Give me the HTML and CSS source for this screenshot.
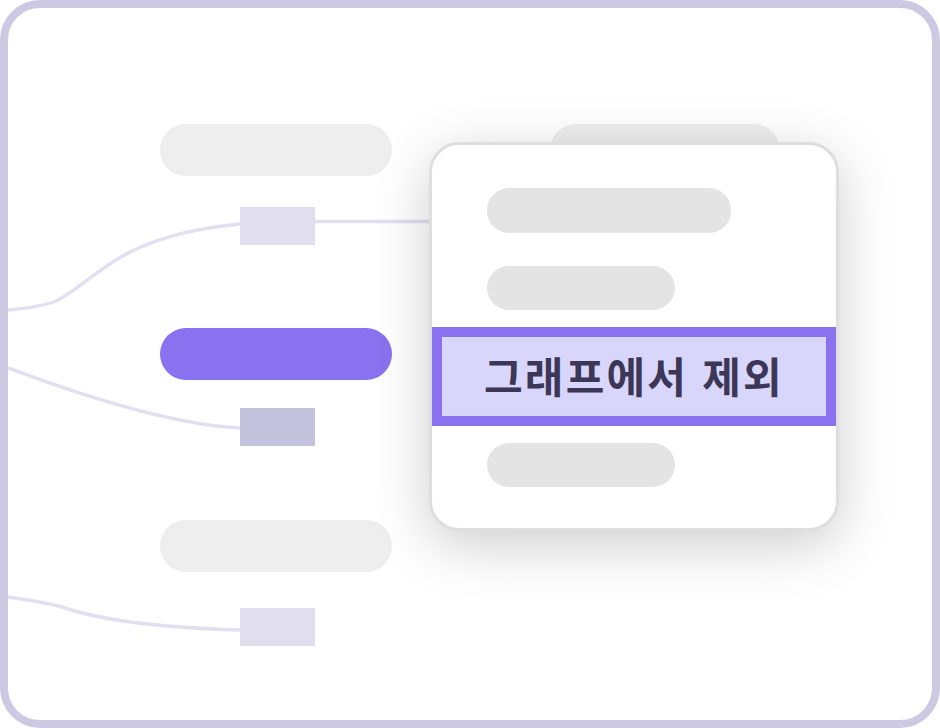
FILE: index.html
```html
<!DOCTYPE html>
<html lang="ko">
<head>
<meta charset="utf-8">
<link rel="stylesheet" href="styles.css">
</head>
<body>
<div class="frame">
  <svg class="wires" viewBox="8 8 924 712" width="924" height="712" aria-hidden="true">
    <path d="M8 310 C 30 308, 44 306, 56 301 C 75 293, 95 270, 130 252 C 165 235, 200 228, 240 224" />
    <path d="M315 221.5 H 432" />
    <path d="M8 368 C 80 395, 170 425, 240 428" />
    <path d="M8 597 C 30 600, 45 602, 62 607 C 105 622, 170 628, 240 630" />
  </svg>
  <div class="canvas">
    <div class="col">
      <div class="pill"></div>
      <div class="port port-a"></div>
      <div class="pill pill-active pill-b"></div>
      <div class="port port-b port-dark"></div>
      <div class="pill pill-c"></div>
      <div class="port port-c"></div>
    </div>
    <div class="col col-right">
      <div class="pill"></div>
    </div>
  </div>
  <div class="menu">
    <div class="menu-bar bar-long"></div>
    <div class="menu-bar bar-short bar-2"></div>
    <div class="menu-item">그래프에서 제외</div>
    <div class="menu-bar bar-short bar-4"></div>
  </div>
</div>
</body>
</html>
```

FILE: styles.css
```css
* { box-sizing: border-box; }
html, body {
  margin: 0;
  padding: 0;
  background: #ffffff;
}
body {
  font-family: "Noto Sans CJK KR", "Noto Sans", sans-serif;
}
.frame {
  position: relative;
  width: 940px;
  height: 728px;
  border: 8px solid #cdc9e3;
  border-radius: 40px;
  background: #ffffff;
  overflow: hidden;
}
.wires {
  position: absolute;
  left: 0;
  top: 0;
  fill: none;
  stroke: #e2e0f0;
  stroke-width: 3.5;
}
.canvas {
  position: relative;
  display: flex;
  gap: 158px;
  padding: 116px 0 0 152px;
}
.col {
  display: flex;
  flex-direction: column;
  width: 232px;
}
.col-right {
  width: 230px;
}
.pill {
  height: 52px;
  border-radius: 26px;
  background: #eeeeee;
}
.pill-active {
  background: #8a71ef;
}
.pill-b { margin-top: 83px; }
.pill-c { margin-top: 74px; }
.port {
  width: 75px;
  height: 38px;
  margin-left: 80px;
  background: #e1dfef;
}
.port-a { margin-top: 31px; }
.port-b { margin-top: 28px; }
.port-c { margin-top: 36px; }
.port-dark { background: #c5c2de; }

.menu {
  position: absolute;
  left: 421px;
  top: 134px;
  width: 410px;
  height: 389px;
  border: 3px solid #dedede;
  border-radius: 30px;
  background: #ffffff;
  box-shadow: 0 14px 56px rgba(0, 0, 0, 0.2);
  padding-top: 43px;
  display: flex;
  flex-direction: column;
  overflow: hidden;
}
.menu-bar {
  margin-left: 55px;
  height: 44px;
  border-radius: 22px;
  background: #e4e4e4;
}
.bar-long { width: 244px; height: 45px; }
.bar-short { width: 188px; }
.bar-2 { margin-top: 33px; }
.bar-4 { margin-top: 17px; }
.menu-item {
  margin-top: 17px;
  height: 99px;
  border: 10px solid #8a71ef;
  background: #d9d6fb;
  display: flex;
  align-items: center;
  padding: 0 0 4px 42px;
  font-size: 42px;
  font-weight: 700;
  color: #3d3757;
  letter-spacing: 2.2px;
  white-space: nowrap;
}
```
